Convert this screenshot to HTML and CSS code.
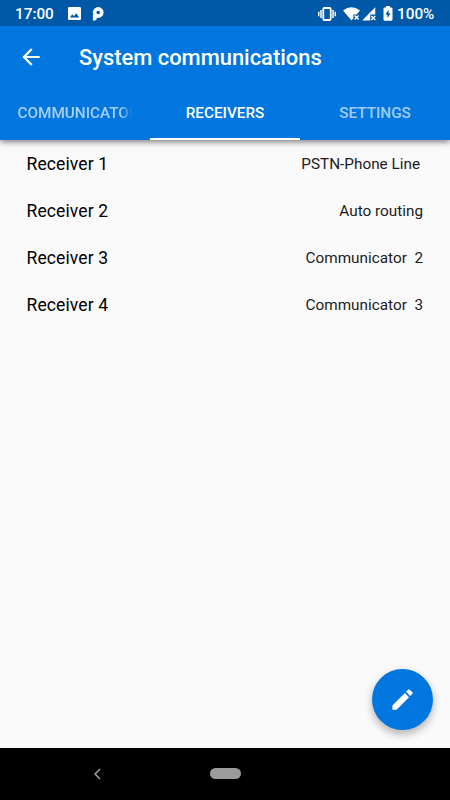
FILE: index.html
```html
<!DOCTYPE html>
<html lang="en">
<head>
  <meta charset="UTF-8" />
  <meta name="viewport" content="width=device-width, initial-scale=1.0"/>
  <title>System communications</title>
  <link rel="stylesheet" href="styles.css">
</head>
<body>
  <header class="header">
    <div class="status-bar">
      <span class="clock">17:00</span>
      <svg class="icon-image" width="13" height="13" viewBox="0 0 13 13">
        <path fill="#fff" fill-rule="evenodd" d="M1.3 0h10.4Q13 0 13 1.3v10.4q0 1.3-1.3 1.3H1.3Q0 13 0 11.7V1.3Q0 0 1.3 0zM1.8 10.4h9.4L8.2 6.3l-2.3 3-1.6-2z"/>
      </svg>
      <svg class="icon-p" width="12" height="14" viewBox="0 0 12 14">
        <circle cx="6.2" cy="5.5" r="3.6" fill="none" stroke="#fff" stroke-width="3.6"/>
        <path fill="#fff" d="M.9 8.2l3.8-1v4.6q0 1.7-1.7 1.7H.9z"/>
      </svg>
      <div class="status-right">
        <svg width="18" height="14" viewBox="0 0 18 14">
          <rect x="5.3" y="1" width="7.4" height="12" rx="1" fill="none" stroke="#fff" stroke-width="1.8"/>
          <path stroke="#fff" stroke-width="1.5" d="M3 3v8M15 3v8M.7 4.8v4.4M17.3 4.8v4.4"/>
        </svg>
        <svg class="icon-wifi" width="18" height="14" viewBox="0 0 18 14">
          <path fill="#fff" d="M0 3.6Q8.3-3 17 3.6L13.6 7.4H10.4V11.2L8.5 13.6z"/>
          <path stroke="#fff" stroke-width="1.4" d="M11.6 8.4l4 4M15.6 8.4l-4 4"/>
        </svg>
        <svg class="icon-signal" width="14" height="14" viewBox="0 0 14 14">
          <path fill="#fff" d="M13.3.3V7.6H8.2V13.4H.2z"/>
          <path stroke="#fff" stroke-width="1.4" d="M9.3 9l4 4M13.3 9l-4 4"/>
        </svg>
        <svg class="icon-battery" width="10" height="15" viewBox="0 0 10 15">
          <path fill="#fff" fill-rule="evenodd" d="M3 0h4v1.4h1.3q1.2 0 1.2 1.2v10.9q0 1.2-1.2 1.2H1.7Q.5 14.7.5 13.5V2.6q0-1.2 1.2-1.2H3zM5.6 3.7L2.4 8.6h2v3.5l3.2-4.9h-2z"/>
        </svg>
        <span class="battery-text">100%</span>
      </div>
    </div>

    <div class="app-bar">
      <svg class="back" width="26" height="26" viewBox="0 0 24 24">
        <path fill="#fff" d="M20 11H7.83l5.59-5.59L12 4l-8 8 8 8 1.41-1.41L7.83 13H20v-2z"/>
      </svg>
      <h1>System communications</h1>
    </div>

    <nav class="tabs">
      <a class="tab"><span class="fade">COMMUNICATORS</span></a>
      <a class="tab active">RECEIVERS</a>
      <a class="tab">SETTINGS</a>
    </nav>
  </header>

  <main class="content">
    <div class="row"><span class="name">Receiver 1</span><span class="value spaced">PSTN-Phone Line</span></div>
    <div class="row"><span class="name">Receiver 2</span><span class="value">Auto routing</span></div>
    <div class="row"><span class="name">Receiver 3</span><span class="value">Communicator  2</span></div>
    <div class="row"><span class="name">Receiver 4</span><span class="value">Communicator  3</span></div>

    <button class="fab" aria-label="Edit">
      <svg width="27" height="27" viewBox="0 0 24 24">
        <path fill="#fff" d="M3 17.25V21h3.75L17.81 9.94l-3.75-3.75L3 17.25zM20.71 7.04a1 1 0 0 0 0-1.41l-2.34-2.34a1 1 0 0 0-1.41 0l-1.83 1.83 3.75 3.75 1.83-1.83z"/>
      </svg>
    </button>
  </main>

  <footer class="nav-bar">
    <svg class="nav-back" width="8" height="12" viewBox="0 0 8 12">
      <path fill="none" stroke="#9b9b9b" stroke-width="1.6" d="M7 1L2.1 6 7 11"/>
    </svg>
    <span class="home"></span>
  </footer>
</body>
</html>
```
FILE: styles.css
```css
* {
  box-sizing: border-box;
}

body {
  margin: 0;
  height: 800px;
  display: flex;
  flex-direction: column;
  font-family: Roboto, "Liberation Sans", sans-serif;
  background: #fafafa;
  overflow: hidden;
}

svg {
  display: block;
  flex-shrink: 0;
}

.header {
  position: relative;
  height: 140px;
  background: #0076de;
  color: #fff;
  box-shadow: 0 2px 6px rgba(0, 0, 0, 0.5);
}

.status-bar {
  display: flex;
  align-items: center;
  height: 26px;
  padding: 1px 15px 0;
  background: #0058a6;
  font-size: 15.3px;
  font-weight: 500;
}

.clock {
  width: 39px;
}

.icon-image {
  margin-left: 14px;
}

.icon-p {
  margin-left: 11px;
}

.status-right {
  display: flex;
  align-items: center;
  margin-left: auto;
}

.icon-wifi {
  margin-left: 7px;
}

.icon-signal {
  margin-left: 1px;
}

.icon-battery {
  margin-left: 7px;
}

.battery-text {
  width: 38px;
  margin-left: 4px;
}

.app-bar {
  display: flex;
  align-items: center;
  height: 62px;
  padding-left: 18px;
}

h1 {
  margin: 0 0 0 35px;
  font-size: 21.9px;
  font-weight: 500;
}

.tabs {
  display: flex;
  height: 52px;
}

.tab {
  width: 150px;
  padding: 0 17.5px;
  line-height: 50px;
  font-size: 15.3px;
  font-weight: 500;
  text-align: center;
  color: rgba(255, 255, 255, 0.65);
}

.tab.active {
  color: #fff;
  border-bottom: 2.5px solid #fff;
}

.fade {
  display: block;
  width: 114px;
  overflow: hidden;
  white-space: nowrap;
  text-align: left;
  -webkit-mask-image: linear-gradient(to right, #000 90%, transparent);
  mask-image: linear-gradient(to right, #000 90%, transparent);
}

.content {
  position: relative;
  flex: 1;
}

.row {
  display: flex;
  justify-content: space-between;
  align-items: center;
  height: 47px;
  padding: 0 27px 0 26.5px;
}

.name {
  font-size: 17.5px;
  letter-spacing: 0.12px;
  color: #000;
}

.value {
  font-size: 15.3px;
  color: #1c1c1c;
  white-space: pre;
}

.value.spaced {
  margin-right: 3px;
}

.fab {
  position: absolute;
  right: 17.5px;
  bottom: 18px;
  display: flex;
  align-items: center;
  justify-content: center;
  width: 61px;
  height: 61px;
  padding: 0;
  border: none;
  border-radius: 50%;
  background: #0076de;
  box-shadow: 0 4px 8px rgba(0, 0, 0, 0.3);
}

.nav-bar {
  display: flex;
  align-items: center;
  height: 52px;
  padding-bottom: 1px;
  background: #000;
}

.nav-back {
  margin-left: 93px;
}

.home {
  width: 31px;
  height: 11px;
  margin-left: 109px;
  border-radius: 6px;
  background: #9b9b9b;
}
```
